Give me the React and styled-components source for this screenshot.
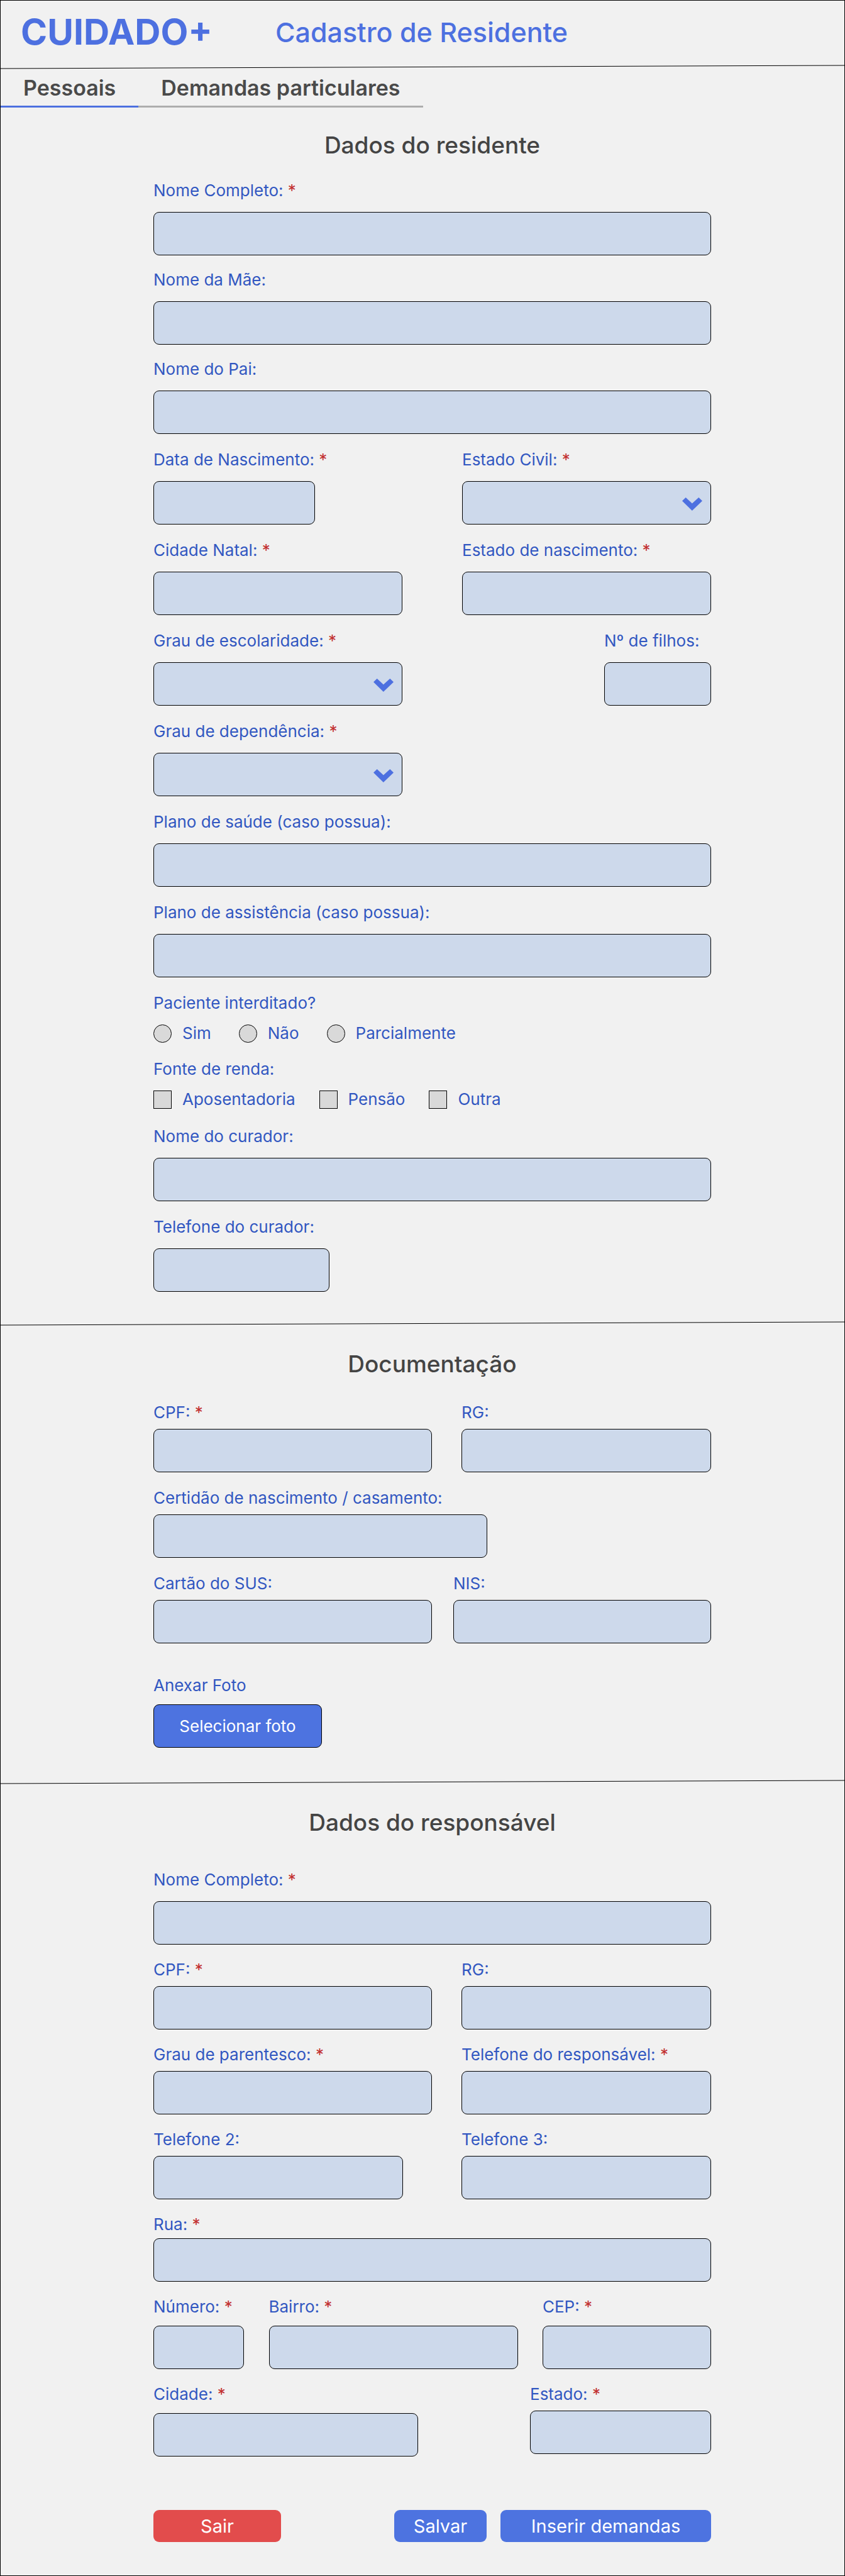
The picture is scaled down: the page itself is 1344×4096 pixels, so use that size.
import React, { useId } from "react";
import styled, { createGlobalStyle } from "styled-components";

const color = {
  page: "#f1f1f1",
  primary: "#4d70e0",
  button: "#4d73e0",
  danger: "#e24c4c",
  label: "#3157c1",
  required: "#c22f2f",
  field: "#cdd9eb",
  choice: "#d9d9d9",
  heading: "#444444",
  tab: "#4a4a4a",
  tabLine: "#adadad",
};

/* Field widths are given in units of the form's full width. */
const FORM_UNITS = 887;

const GlobalStyle = createGlobalStyle`
  *, *::before, *::after { box-sizing: border-box; }
  body {
    margin: 0;
    background: ${color.page};
    font-family: Inter, "Liberation Sans", sans-serif;
  }
  button, input, select { font: inherit; }
`;

const Page = styled.div`
  min-height: 100vh;
  border: 1px solid #000;
  background: ${color.page};
`;

const Header = styled.header`
  display: flex;
  align-items: center;
  gap: 100px;
  height: 100px;
  padding: 0 32px;
  color: ${color.primary};
`;

const Logo = styled.a`
  font-size: 57px;
  font-weight: 700;
  line-height: 68px;
  color: inherit;
  text-decoration: none;
`;

const PageTitle = styled.h1`
  margin: 0;
  font-size: 43px;
  font-weight: 500;
  line-height: 52px;
`;

const RuleDrawing = styled.svg`
  display: block;
  width: 100%;
  height: 10px;
`;

const Tabs = styled.nav`
  display: flex;
`;

const Tab = styled.button`
  height: 60px;
  padding: 0 36px;
  border: 0;
  border-bottom: 3px solid ${(p) => (p.$active ? color.primary : color.tabLine)};
  background: none;
  color: ${color.tab};
  font-size: 34px;
  font-weight: 600;
  line-height: 40px;
`;

const Section = styled.section`
  padding: 38px 212px ${(p) => p.$bottom}px 243px;
`;

const SectionTitle = styled.h2`
  margin: 0 0 ${(p) => p.$space}px;
  color: ${color.heading};
  font-size: 37px;
  font-weight: 500;
  line-height: 44px;
  text-align: center;
`;

const Rows = styled.div`
  display: flex;
  flex-direction: column;
  gap: ${(p) => p.$gap}px;
`;

const Row = styled.div`
  display: flex;
  justify-content: space-between;
`;

const FieldBox = styled.div`
  display: flex;
  flex-direction: column;
  gap: ${(p) => p.$gap}px;
  width: calc(100% * ${(p) => p.$units} / ${FORM_UNITS});
`;

const Label = styled.label`
  color: ${color.label};
  font-size: 26px;
  line-height: 36px;
  white-space: nowrap;
`;

const Required = styled.span`
  color: ${color.required};
`;

const TextInput = styled.input`
  width: 100%;
  height: 69px;
  padding: 0 16px;
  border: 1px solid #000;
  border-radius: 9px;
  background: ${color.field};
  color: ${color.heading};
  font-size: 26px;
`;

const SelectWrap = styled.div`
  position: relative;
`;

const SelectInput = styled(TextInput).attrs({ as: "select" })`
  display: block;
  appearance: none;
  padding-right: 56px;
`;

const Arrow = styled.svg`
  position: absolute;
  top: 26px;
  right: 14px;
  width: 32px;
  height: 21px;
  fill: ${color.primary};
  pointer-events: none;
`;

const ChoiceGroup = styled.fieldset`
  display: flex;
  flex-direction: column;
  gap: 12px;
  min-width: 0;
  margin: 0;
  padding: 0;
  border: 0;
`;

const ChoiceRow = styled.div`
  display: flex;
  gap: ${(p) => p.$gap}px;
`;

const ChoiceLabel = styled(Label)`
  display: flex;
  align-items: center;
  gap: 17px;
`;

const ChoiceInput = styled.input`
  appearance: none;
  width: 29px;
  height: 29px;
  margin: 0;
  border: 1px solid #000;
  border-radius: ${(p) => (p.type === "radio" ? "50%" : "0")};
  background: ${color.choice};

  &:checked {
    background: ${color.primary};
  }
`;

const PhotoField = styled.div`
  display: flex;
  flex-direction: column;
  align-items: flex-start;
  gap: 12px;
  padding-top: 26px;
`;

const PhotoButton = styled.button`
  min-width: 268px;
  height: 69px;
  border: 1px solid #000;
  border-radius: 9px;
  background: ${color.button};
  color: #fff;
  font-size: 26px;
`;

const Actions = styled.div`
  display: flex;
  gap: 22px;
  padding-top: 85px;
`;

const ActionButton = styled.button`
  min-width: ${(p) => p.$width}px;
  height: 51px;
  border: 0;
  border-radius: 9px;
  background: ${(p) => (p.$danger ? color.danger : color.button)};
  color: #fff;
  font-size: 29px;
  line-height: 36px;

  &:first-child {
    margin-right: auto;
  }
`;

function Rule() {
  return (
    <RuleDrawing aria-hidden="true">
      <line x1="0" y1="8" x2="100%" y2="3" stroke="#000" strokeWidth="1" />
    </RuleDrawing>
  );
}

function Field({ label, required, units = FORM_UNITS, gap = 16, select }) {
  const id = useId();
  return (
    <FieldBox $units={units} $gap={gap}>
      <Label htmlFor={id}>
        {label}
        {required && <Required> *</Required>}
      </Label>
      {select ? (
        <SelectWrap>
          <SelectInput id={id} defaultValue="">
            <option value="" aria-label="Selecione" />
          </SelectInput>
          <Arrow viewBox="0 0 101 66" aria-hidden="true">
            <path d="M0 17 18 0 50 30 83 0 101 17 50 66Z" />
          </Arrow>
        </SelectWrap>
      ) : (
        <TextInput id={id} type="text" required={required} />
      )}
    </FieldBox>
  );
}

function Choices({ legend, type, name, options, gap }) {
  const id = useId();
  return (
    <ChoiceGroup aria-labelledby={id}>
      <Label as="span" id={id}>{legend}</Label>
      <ChoiceRow $gap={gap}>
        {options.map((option) => (
          <ChoiceLabel key={option}>
            <ChoiceInput type={type} name={name} value={option} />
            {option}
          </ChoiceLabel>
        ))}
      </ChoiceRow>
    </ChoiceGroup>
  );
}

export default function App() {
  return (
    <Page>
      <GlobalStyle />
      <Header>
        <Logo href="#">CUIDADO+</Logo>
        <PageTitle>Cadastro de Residente</PageTitle>
      </Header>
      <Rule />
      <Tabs>
        <Tab type="button" $active>Pessoais</Tab>
        <Tab type="button">Demandas particulares</Tab>
      </Tabs>

      <Section $bottom={45}>
        <SectionTitle $space={32}>Dados do residente</SectionTitle>
        <Rows $gap={23}>
          <Rows $gap={21}>
            <Field label="Nome Completo:" required />
            <Field label="Nome da Mãe:" />
            <Field label="Nome do Pai:" />
          </Rows>
          <Row>
            <Field label="Data de Nascimento:" required units={257} />
            <Field label="Estado Civil:" required units={396} select />
          </Row>
          <Row>
            <Field label="Cidade Natal:" required units={396} />
            <Field label="Estado de nascimento:" required units={396} />
          </Row>
          <Row>
            <Field label="Grau de escolaridade:" required units={396} select />
            <Field label="Nº de filhos:" units={170} />
          </Row>
          <Field label="Grau de dependência:" required units={396} select />
          <Field label="Plano de saúde (caso possua):" />
          <Field label="Plano de assistência (caso possua):" />
          <Rows $gap={21}>
            <Choices
              legend="Paciente interditado?"
              type="radio"
              name="interditado"
              options={["Sim", "Não", "Parcialmente"]}
              gap={44}
            />
            <Choices
              legend="Fonte de renda:"
              type="checkbox"
              name="renda"
              options={["Aposentadoria", "Pensão", "Outra"]}
              gap={38}
            />
          </Rows>
          <Field label="Nome do curador:" />
          <Field label="Telefone do curador:" units={280} />
        </Rows>
      </Section>

      <Rule />
      <Section $bottom={49}>
        <SectionTitle $space={37}>Documentação</SectionTitle>
        <Rows $gap={23}>
          <Row>
            <Field label="CPF:" required units={443} gap={8} />
            <Field label="RG:" units={397} gap={8} />
          </Row>
          <Field label="Certidão de nascimento / casamento:" units={531} gap={8} />
          <Row>
            <Field label="Cartão do SUS:" units={443} gap={8} />
            <Field label="NIS:" units={410} gap={8} />
          </Row>
          <PhotoField>
            <Label htmlFor="foto">Anexar Foto</Label>
            <PhotoButton id="foto" type="button">Selecionar foto</PhotoButton>
          </PhotoField>
        </Rows>
      </Section>

      <Rule />
      <Section $bottom={52}>
        <SectionTitle $space={51}>Dados do responsável</SectionTitle>
        <Rows $gap={22}>
          <Field label="Nome Completo:" required />
          <Row>
            <Field label="CPF:" required units={443} gap={8} />
            <Field label="RG:" units={397} gap={8} />
          </Row>
          <Row>
            <Field label="Grau de parentesco:" required units={443} gap={8} />
            <Field label="Telefone do responsável:" required units={397} gap={8} />
          </Row>
          <Row>
            <Field label="Telefone 2:" units={397} gap={8} />
            <Field label="Telefone 3:" units={397} gap={8} />
          </Row>
          <Field label="Rua:" required gap={4} />
          <Row>
            <Field label="Número:" required units={144} gap={12} />
            <Field label="Bairro:" required units={396} gap={12} />
            <Field label="CEP:" required units={268} gap={12} />
          </Row>
          <Row>
            <Field label="Cidade:" required units={421} gap={12} />
            <Field label="Estado:" required units={288} gap={8} />
          </Row>
        </Rows>
        <Actions>
          <ActionButton type="button" $danger $width={203}>Sair</ActionButton>
          <ActionButton type="button" $width={147}>Salvar</ActionButton>
          <ActionButton type="button" $width={335}>Inserir demandas</ActionButton>
        </Actions>
      </Section>
    </Page>
  );
}
